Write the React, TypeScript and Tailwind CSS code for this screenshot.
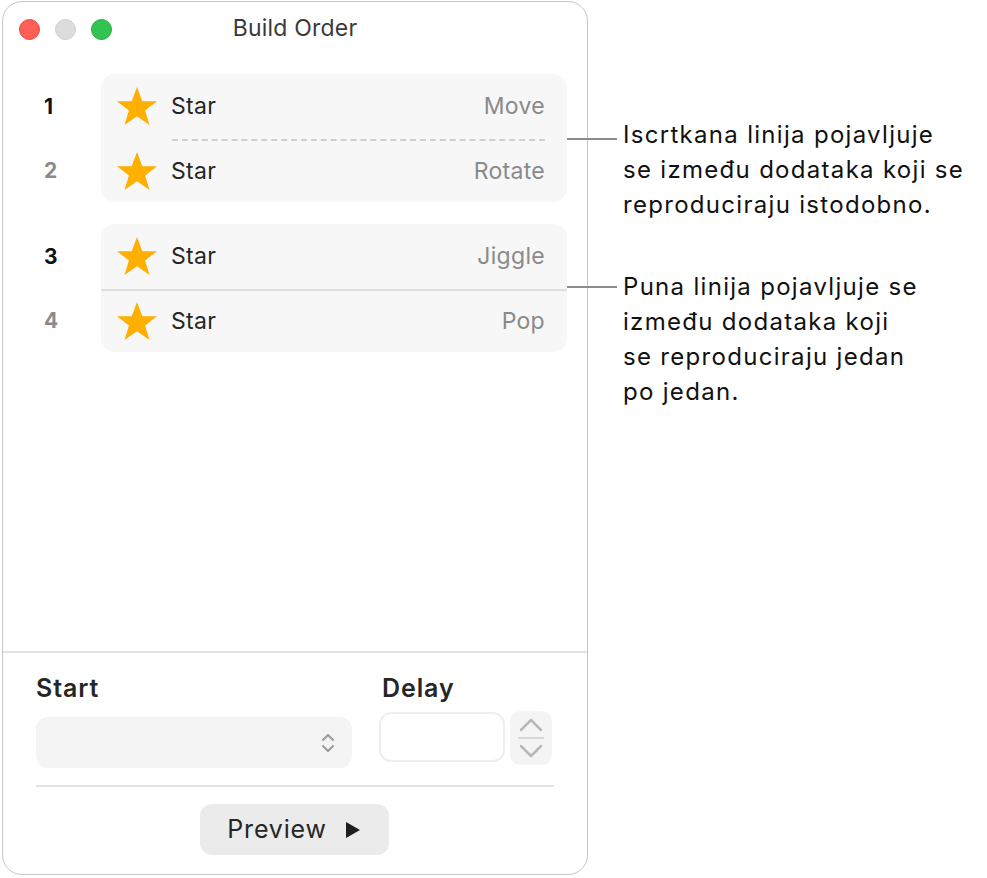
import React from "react";

const Star = () => (
  <svg width="44" height="44" viewBox="0 0 44 44" className="shrink-0">
    <polygon
      points="22,2 27.3,16.2 42,16.2 30.1,25.4 34.5,40 22,31.3 9.5,40 13.9,25.4 2,16.2 16.7,16.2"
      fill="#ffaf00"
    />
  </svg>
);

const Row = ({ effect, h }: { effect: string; h: string }) => (
  <div className={`flex items-center pl-[14px] pr-[22px] ${h}`}>
    <Star />
    <span className="ml-[12px] text-[23px] tracking-[0.3px] text-[#262626]">Star</span>
    <span className="ml-auto text-[23px] tracking-[0.3px] text-[#8a8a8a]">{effect}</span>
  </div>
);

const Num = ({ n, dark, h }: { n: string; dark: boolean; h: string }) => (
  <div className={`flex items-center pl-[41px] ${h}`}>
    <span className={`text-[21px] font-bold ${dark ? "text-[#111]" : "text-[#8a8a8a]"}`}>{n}</span>
  </div>
);

export default function App() {
  return (
    <div
      className="w-[987px] h-[878px] bg-white flex items-start"
      style={{ fontFamily: "Inter, 'Noto Sans', sans-serif" }}
    >
      <div className="ml-[2px] mt-[1px] w-[586px] h-[874px] border border-[#c6c6c6] rounded-[20px] flex flex-col shrink-0 bg-white">
        {/* title bar */}
        <div className="h-[56px] flex items-center relative shrink-0">
          <div className="flex items-center gap-[15px] pl-[16px] -mt-[2px]">
            <div className="w-[21px] h-[21px] rounded-full bg-[#ff5f57] border border-[#e5463f]" />
            <div className="w-[21px] h-[21px] rounded-full bg-[#dcdcdc] border border-[#cfcfcf]" />
            <div className="w-[21px] h-[21px] rounded-full bg-[#31c452] border border-[#24ab43]" />
          </div>
          <div className="absolute inset-0 flex items-center justify-center -mt-[4px] text-[23px] tracking-[0.2px] text-[#3a3a3a]">
            Build Order
          </div>
        </div>

        {/* groups */}
        <div className="pt-[16px] flex flex-col gap-[22px]">
          <div className="flex">
            <div className="w-[98px] flex flex-col">
              <Num n="1" dark h="h-[65px]" />
              <div className="h-[1px]" />
              <Num n="2" dark={false} h="h-[62px]" />
            </div>
            <div className="w-[466px] bg-[#f7f7f7] rounded-[14px] flex flex-col">
              <Row effect="Move" h="h-[65px]" />
              <div className="h-[1px] ml-[71px] mr-[22px] border-t-2 border-dashed border-[#cfcfcf]" />
              <Row effect="Rotate" h="h-[61px]" />
            </div>
          </div>
          <div className="flex">
            <div className="w-[98px] flex flex-col">
              <Num n="3" dark h="h-[65px]" />
              <div className="h-[1px]" />
              <Num n="4" dark={false} h="h-[62px]" />
            </div>
            <div className="w-[466px] bg-[#f7f7f7] rounded-[14px] flex flex-col">
              <Row effect="Jiggle" h="h-[65px]" />
              <div className="h-[2px] bg-[#dedede]" />
              <Row effect="Pop" h="h-[61px]" />
            </div>
          </div>
        </div>

        <div className="flex-1" />

        {/* bottom */}
        <div className="h-[2px] bg-[#e4e4e4] shrink-0" />
        <div className="px-[33px] pb-[19px] flex flex-col">
          <div className="flex pt-[22px]">
            <div className="w-[316px] flex flex-col">
              <div className="h-[28px] flex items-center text-[25px] tracking-[0.9px] font-semibold text-[#262626]">Start</div>
              <div className="mt-[14px] h-[51px] rounded-[12px] bg-[#f4f4f4] flex items-center justify-end pr-[17px]">
                <svg width="14" height="24" viewBox="0 0 14 24">
                  <path d="M2 9 L7 4 L12 9" fill="none" stroke="#9a9a9a" strokeWidth="2" strokeLinecap="round" strokeLinejoin="round" />
                  <path d="M2 15 L7 20 L12 15" fill="none" stroke="#9a9a9a" strokeWidth="2" strokeLinecap="round" strokeLinejoin="round" />
                </svg>
              </div>
            </div>
            <div className="ml-[27px] flex flex-col">
              <div className="h-[28px] flex items-center text-[25px] tracking-[0.9px] font-semibold text-[#262626] pl-[3px]">Delay</div>
              <div className="flex items-start mt-[8px] gap-[5px]">
                <div className="mt-[1px] w-[126px] h-[50px] rounded-[12px] bg-white border-2 border-[#eeeeee]" />
                <div className="w-[42px] h-[54px] rounded-[10px] bg-[#f4f4f4] flex flex-col items-center justify-center">
                  <svg width="30" height="46" viewBox="0 0 30 46">
                    <path d="M5 15 L15 5 L25 15" fill="none" stroke="#b8b8b8" strokeWidth="2.5" strokeLinecap="round" strokeLinejoin="round" />
                    <line x1="2" y1="23" x2="28" y2="23" stroke="#d8d8d8" strokeWidth="2" />
                    <path d="M5 31 L15 41 L25 31" fill="none" stroke="#b8b8b8" strokeWidth="2.5" strokeLinecap="round" strokeLinejoin="round" />
                  </svg>
                </div>
              </div>
            </div>
          </div>
          <div className="mt-[17px] h-[2px] bg-[#e4e4e4]" />
          <div className="flex justify-center mt-[17px]">
            <div className="w-[189px] h-[51px] rounded-[12px] bg-[#ebebeb] flex items-center justify-center gap-[18px] -ml-[2px]">
              <span className="text-[25px] tracking-[0.8px] text-[#262626]">Preview</span>
              <svg width="16" height="18" viewBox="0 0 16 18">
                <polygon points="1,1 15,9 1,17" fill="#1e1e1e" />
              </svg>
            </div>
          </div>
        </div>
      </div>

      {/* callouts */}
      <div className="flex flex-col pt-[117px] gap-[47px] text-[24px] tracking-[1.3px] leading-[35px] text-[#111]">
        <div className="flex items-start">
          <div className="-ml-[21px] mt-[21px] w-[50px] h-[2px] bg-[#8c8c8c] shrink-0" />
          <div className="ml-[6px] whitespace-nowrap">
            <div>Iscrtkana linija pojavljuje</div>
            <div>se između dodataka koji se</div>
            <div>reproduciraju istodobno.</div>
          </div>
        </div>
        <div className="flex items-start">
          <div className="-ml-[21px] mt-[17px] w-[50px] h-[2px] bg-[#8c8c8c] shrink-0" />
          <div className="ml-[6px] whitespace-nowrap">
            <div>Puna linija pojavljuje se</div>
            <div>između dodataka koji</div>
            <div>se reproduciraju jedan</div>
            <div>po jedan.</div>
          </div>
        </div>
      </div>
    </div>
  );
}
